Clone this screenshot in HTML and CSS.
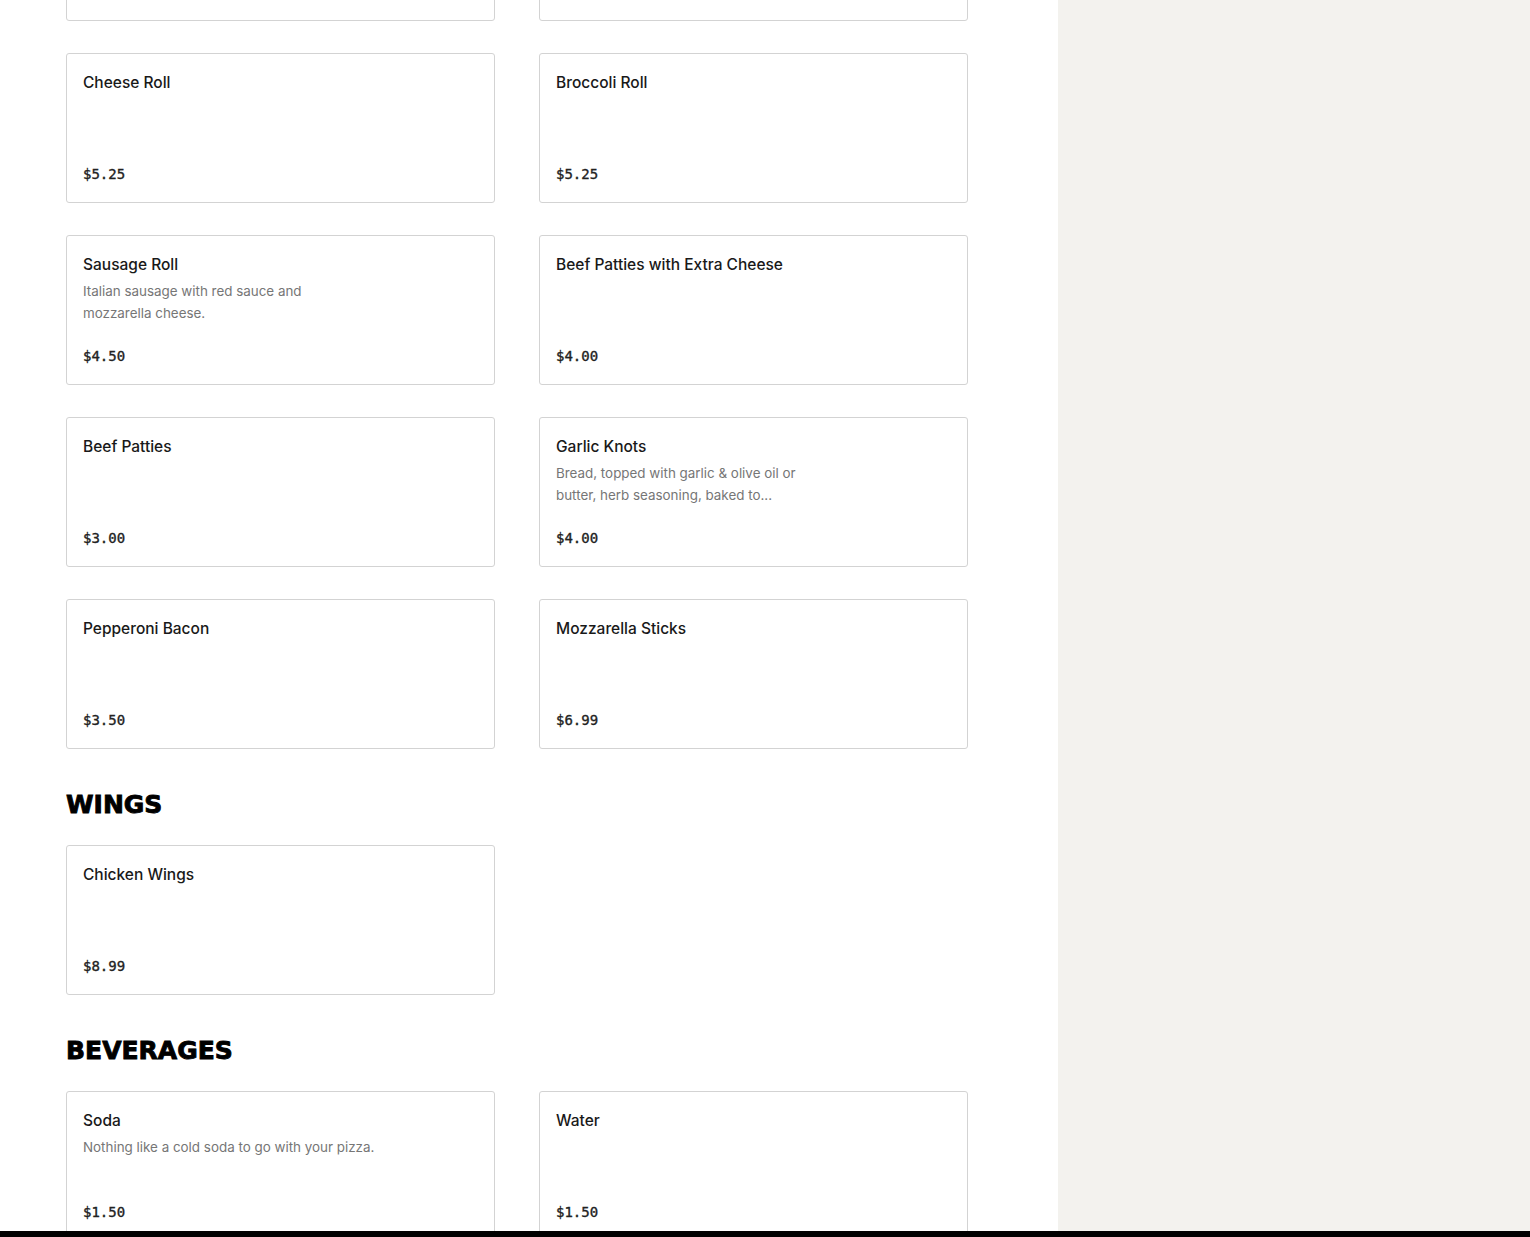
FILE: index.html
```html
<!DOCTYPE html>
<html lang="en">
<head>
<meta charset="utf-8">
<title>Menu</title>
<link rel="stylesheet" href="styles.css">
</head>
<body>
<div class="page">
  <main class="menu">
    <section class="section first">
      <div class="grid">
        <div class="card"><div class="title">Spinach Roll</div><div class="price">$5.25</div></div>
        <div class="card"><div class="title">Chicken Roll</div><div class="price">$5.25</div></div>
        <div class="card"><div class="title">Cheese Roll</div><div class="price">$5.25</div></div>
        <div class="card"><div class="title">Broccoli Roll</div><div class="price">$5.25</div></div>
        <div class="card"><div class="title">Sausage Roll</div><div class="desc">Italian sausage with red sauce and<br>mozzarella cheese.</div><div class="price">$4.50</div></div>
        <div class="card"><div class="title">Beef Patties with Extra Cheese</div><div class="price">$4.00</div></div>
        <div class="card"><div class="title">Beef Patties</div><div class="price">$3.00</div></div>
        <div class="card"><div class="title">Garlic Knots</div><div class="desc">Bread, topped with garlic &amp; olive oil or<br>butter, herb seasoning, baked to...</div><div class="price">$4.00</div></div>
        <div class="card"><div class="title">Pepperoni Bacon</div><div class="price">$3.50</div></div>
        <div class="card"><div class="title">Mozzarella Sticks</div><div class="price">$6.99</div></div>
      </div>
    </section>
    <section class="section">
      <h2 class="heading">WINGS</h2>
      <div class="grid">
        <div class="card"><div class="title">Chicken Wings</div><div class="price">$8.99</div></div>
      </div>
    </section>
    <section class="section">
      <h2 class="heading">BEVERAGES</h2>
      <div class="grid">
        <div class="card"><div class="title">Soda</div><div class="desc">Nothing like a cold soda to go with your pizza.</div><div class="price">$1.50</div></div>
        <div class="card"><div class="title">Water</div><div class="price">$1.50</div></div>
      </div>
    </section>
  </main>
  <aside class="side"></aside>
</div>
<div class="bottom-bar"></div>
</body>
</html>
```
FILE: styles.css
```css
html, body {
  margin: 0;
  padding: 0;
  height: 1237px;
  overflow: hidden;
  background: #ffffff;
}
.page {
  display: flex;
  height: 1237px;
}
.menu {
  width: 1058px;
  flex: none;
  padding-left: 66px;
  box-sizing: border-box;
  background: #ffffff;
}
.side {
  flex: 1;
  background: #f3f2ee;
}
.section.first {
  margin-top: -129px;
}
.heading {
  margin: 40px 0 24px;
  height: 32px;
  line-height: 32px;
  font-family: "DejaVu Sans", sans-serif;
  font-weight: 700;
  font-size: 25px;
  letter-spacing: 0;
  -webkit-text-stroke: 0.9px #000000;
  color: #000000;
}
.grid {
  display: grid;
  grid-template-columns: 429px 429px;
  column-gap: 44px;
  row-gap: 32px;
}
.card {
  box-sizing: border-box;
  height: 150px;
  border: 1px solid #d3d3d3;
  border-radius: 3px;
  padding: 16px;
  display: flex;
  flex-direction: column;
  background: #ffffff;
}
.title {
  padding-top: 1px;
  font-family: "Inter", "Liberation Sans", sans-serif;
  font-weight: 500;
  font-size: 15.5px;
  line-height: 24px;
  color: #191919;
}
.desc {
  margin-top: 3px;
  font-family: "Inter", "Liberation Sans", sans-serif;
  font-size: 13.4px;
  line-height: 22px;
  color: #767676;
  white-space: nowrap;
}
.price {
  margin-top: auto;
  margin-bottom: 2px;
  font-family: "DejaVu Sans Mono", monospace;
  font-weight: 400;
  font-size: 14px;
  line-height: 20px;
  -webkit-text-stroke: 0.35px #222222;
  color: #222222;
}
.bottom-bar {
  position: fixed;
  left: 0;
  right: 0;
  bottom: 0;
  height: 6px;
  background: #000000;
}
```
